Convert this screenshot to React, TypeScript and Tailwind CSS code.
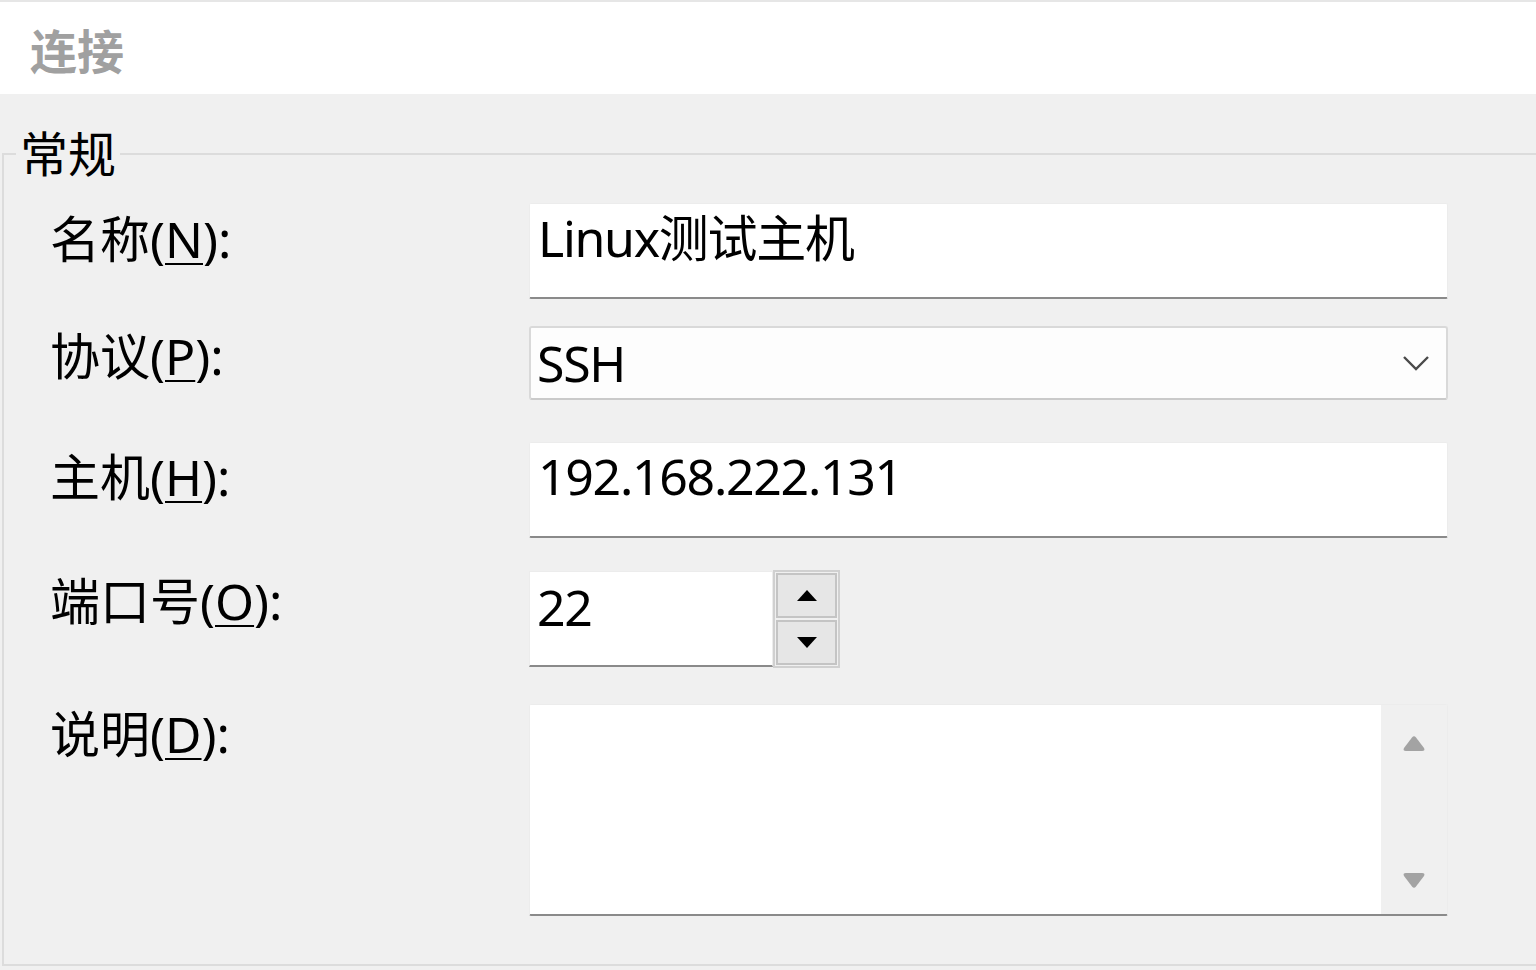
import { ReactNode } from "react";

const LATIN = "font-['Noto_Sans','Noto_Sans_CJK_SC',sans-serif]";

function Label({ text, keyChar, offset }: { text: string; keyChar: string; offset: string }) {
  return (
    <div className={`w-[479px] shrink-0 text-[50px] leading-[60px] text-black ${offset}`}>
      {text}(<span className="underline decoration-[2px] underline-offset-[5px]">{keyChar}</span>):
    </div>
  );
}

function TextBox({ value, className = "" }: { value: string; className?: string }) {
  return (
    <div
      className={`w-[919px] h-[96px] bg-white border border-[#ececec] border-b-2 border-b-[#8a8a8a] rounded-[2px] pl-[8px] text-[50px] leading-[64px] tracking-[-1.3px] text-black ${className}`}
    >
      {value}
    </div>
  );
}

function Row({ children, className = "" }: { children: ReactNode; className?: string }) {
  return <div className={`flex items-start ${className}`}>{children}</div>;
}

export default function App() {
  return (
    <div className={`w-[1536px] h-[970px] overflow-hidden bg-[#f0f0f0] ${LATIN}`}>
      {/* Page header */}
      <div className="h-[94px] bg-white border-t-2 border-[#e6e6e6] flex items-center pl-[30px]">
        <span className="text-[47px] font-bold leading-none text-[#a0a0a0] font-['Noto_Sans_CJK_SC',sans-serif]">
          连接
        </span>
      </div>

      <fieldset className="mt-[31px] ml-[2px] w-[1560px] h-[841px] border-2 border-[#dcdcdc]">
        <legend className="ml-[12px] px-[4px] text-[48px] leading-[58px] text-black">常规</legend>

        <div className="pl-[46px] pt-[20px]">
          <Row>
            <Label text="名称" keyChar="N" offset="pt-[6px]" />
            <TextBox value="Linux测试主机" className="h-[95px] pt-[2px]" />
          </Row>

          <Row className="mt-[27px]">
            <Label text="协议" keyChar="P" offset="pt-0" />
            <div className="w-[919px] h-[74px] bg-[#fdfdfd] border-2 border-[#d9d9d9] border-b-[#cacaca] rounded-[3px] pl-[6px] pr-[16px] flex items-center justify-between">
              <span className="text-[50px] leading-[64px] tracking-[-1.3px] text-black">SSH</span>
              <svg width="28" height="16" viewBox="0 0 28 16" fill="none">
                <path d="M2 2l12 12L26 2" stroke="#4a4a4a" strokeWidth="2.4" />
              </svg>
            </div>
          </Row>

          <Row className="mt-[42px]">
            <Label text="主机" keyChar="H" offset="pt-[5px]" />
            <TextBox value="192.168.222.131" className="pt-[1px]" />
          </Row>

          <Row className="mt-[33px]">
            <Label text="端口号" keyChar="O" offset="pt-0" />
            <div className="flex">
              <div className="w-[244px] h-[96px] bg-white border border-[#ececec] border-b-2 border-b-[#8a8a8a] pl-[7px] pt-[3px] text-[50px] leading-[64px] tracking-[-1.3px] text-black">
                22
              </div>
              <div className="w-[67px] h-[98px] -mt-[1px] border-2 border-[#d0d0d0] bg-[#f0f0f0] p-[1px] flex flex-col gap-[2px]">
                <div className="flex-1 bg-[#e6e6e6] border-2 border-[#c4c4c4] flex items-center justify-center">
                  <svg width="20" height="11" viewBox="0 0 20 11">
                    <path d="M10 0L20 11H0z" fill="#000" />
                  </svg>
                </div>
                <div className="flex-1 bg-[#e6e6e6] border-2 border-[#c4c4c4] flex items-center justify-center">
                  <svg width="20" height="11" viewBox="0 0 20 11">
                    <path d="M0 0h20L10 11z" fill="#000" />
                  </svg>
                </div>
              </div>
            </div>
          </Row>

          <Row className="mt-[36px]">
            <Label text="说明" keyChar="D" offset="pt-0" />
            <div className="w-[919px] h-[212px] bg-white border border-[#ececec] border-b-2 border-b-[#8a8a8a] rounded-[2px] flex justify-end">
              <div className="w-[66px] h-full bg-[#f0f0f0] flex flex-col items-center justify-between pt-[29px] pb-[24px]">
                <svg width="24" height="18" viewBox="0 0 24 18">
                  <path d="M10 3.5Q12 1 14 3.5L22 14Q23.5 17 20 17H4Q0.5 17 2 14z" fill="#a3a3a3" />
                </svg>
                <svg width="24" height="18" viewBox="0 0 24 18">
                  <path d="M10 14.5Q12 17 14 14.5L22 4Q23.5 1 20 1H4Q0.5 1 2 4z" fill="#a3a3a3" />
                </svg>
              </div>
            </div>
          </Row>
        </div>
      </fieldset>
    </div>
  );
}
